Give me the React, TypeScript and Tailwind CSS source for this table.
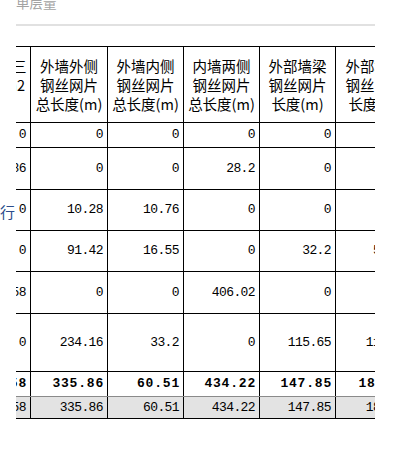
import React from "react";

const colW = ["w-[77px]", "w-[77px]", "w-[76px]", "w-[76px]", "w-[76px]", "w-[78px]"];

const headers: string[][] = [
  [],
  ["外墙外侧", "钢丝网片", "总长度(m)"],
  ["外墙内侧", "钢丝网片", "总长度(m)"],
  ["内墙两侧", "钢丝网片", "总长度(m)"],
  ["外部墙梁", "钢丝网片", "长度(m)"],
  ["外部墙柱", "钢丝网片", "长度(m)"],
];

const rows: { h: string; v: string[] }[] = [
  { h: "h-[25px]", v: ["0", "0", "0", "0", "0", "0"] },
  { h: "h-[42px]", v: ["45.86", "0", "0", "28.2", "0", "0"] },
  { h: "h-[41px]", v: ["0", "10.28", "10.76", "0", "0", "0"] },
  { h: "h-[41px]", v: ["0", "91.42", "16.55", "0", "32.2", "54.61"] },
  { h: "h-[42px]", v: ["12.58", "0", "0", "406.02", "0", "0"] },
  { h: "h-[58px]", v: ["0", "234.16", "33.2", "0", "115.65", "118.32"] },
];

const totals = ["57.58", "335.86", "60.51", "434.22", "147.85", "182.93"];

const num = "font-['Liberation_Mono',monospace] text-[13px] tracking-[-0.6px]";

export default function App() {
  return (
    <div className="w-[406px] h-[461px] bg-white overflow-hidden flex text-black">
      <div className="w-[16px] shrink-0 overflow-hidden flex justify-end pt-[204px]">
        <span className="font-['Noto_Sans_CJK_SC',sans-serif] text-[15px] leading-[15px] text-[#2b4c8c] pr-[1px] whitespace-nowrap">
          行
        </span>
      </div>
      <div className="w-[359px] shrink-0 flex flex-col">
        <div className="mt-[-5px] h-[14px] font-['Noto_Sans_CJK_SC',sans-serif] text-[13.5px] leading-[14px] text-[#a3a3a3]">
          单层量
        </div>
        <div className="mt-[15px] h-[2px] bg-[#e1e1e1]" />
        <div className="mt-[20px] overflow-hidden border-t border-black">
          <div className="ml-[-62px] w-[460px] flex flex-col">
            {/* header */}
            <div className="flex h-[76px] border-b border-black font-['Noto_Sans_CJK_SC',sans-serif] text-[14.5px] leading-[19px]">
              <div className={`${colW[0]} shrink-0 border-r border-black flex flex-col justify-center`}>
                <div className="text-right pr-[6px] whitespace-nowrap">钢丝网片三</div>
                <div className="text-right pr-[5px] whitespace-nowrap">总面积m2</div>
                <div className="text-center whitespace-nowrap">合计</div>
              </div>
              {headers.slice(1).map((lines, i) => (
                <div
                  key={i}
                  className={`${colW[i + 1]} shrink-0 border-r border-black flex flex-col justify-center items-center`}
                >
                  {lines.map((l, j) => (
                    <div key={j} className="whitespace-nowrap">
                      {l}
                    </div>
                  ))}
                </div>
              ))}
            </div>
            {rows.map((r, i) => (
              <div key={i} className={`flex ${r.h} border-b border-black ${num}`}>
                {r.v.map((v, j) => (
                  <div
                    key={j}
                    className={`${colW[j]} shrink-0 border-r border-black flex items-center justify-end pr-[4px] whitespace-nowrap`}
                  >
                    {v}
                  </div>
                ))}
              </div>
            ))}
            <div className={`flex h-[25px] border-b border-[#8a8a8a] font-['Liberation_Mono',monospace] text-[13px] tracking-[0.8px] font-bold`}>
              {totals.map((v, j) => (
                <div
                  key={j}
                  className={`${colW[j]} shrink-0 border-r border-black flex items-center justify-end pr-[3px] whitespace-nowrap`}
                >
                  {v}
                </div>
              ))}
            </div>
            <div className={`flex h-[22px] border-b border-black bg-[#e3e3e3] ${num}`}>
              {totals.map((v, j) => (
                <div
                  key={j}
                  className={`${colW[j]} shrink-0 border-r border-black flex items-center justify-end pr-[4px] whitespace-nowrap`}
                >
                  {v}
                </div>
              ))}
            </div>
          </div>
        </div>
      </div>
    </div>
  );
}
